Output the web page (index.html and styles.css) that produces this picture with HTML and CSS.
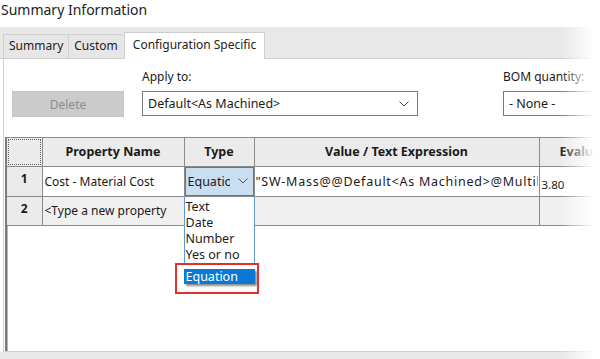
FILE: index.html
```html
<!DOCTYPE html>
<html lang="en">
<head>
    <meta charset="UTF-8">
    <title>Summary Information</title>
    <link rel="stylesheet" href="styles.css">
</head>
<body>
    <div class="window">
        <div class="title">Summary Information</div>

        <div class="tabs">
            <div class="tab">Summary</div>
            <div class="tab">Custom</div>
            <div class="tab active">Configuration Specific</div>
        </div>

        <div class="panel">
            <div class="form-row">
                <div class="field field-delete">
                    <div class="label">&nbsp;</div>
                    <button class="btn" disabled>Delete</button>
                </div>
                <div class="field field-apply">
                    <div class="label">Apply to:</div>
                    <div class="select">
                        <span>Default&lt;As Machined&gt;</span>
                        <svg class="chev" width="10" height="6" viewBox="0 0 10 6"><path d="M0.5 0.5 L5 5 L9.5 0.5" fill="none" stroke="#444" stroke-width="1"/></svg>
                    </div>
                </div>
                <div class="field field-bom">
                    <div class="label">BOM quantity:</div>
                    <div class="select">
                        <span>- None -</span>
                    </div>
                </div>
            </div>

            <div class="grid">
                <table class="props">
                    <colgroup>
                        <col class="c-num">
                        <col class="c-name">
                        <col class="c-type">
                        <col class="c-value">
                        <col class="c-eval">
                    </colgroup>
                    <thead>
                        <tr>
                            <th class="corner"></th>
                            <th>Property Name</th>
                            <th>Type</th>
                            <th>Value / Text Expression</th>
                            <th class="eval-head">Evaluated Value</th>
                        </tr>
                    </thead>
                    <tbody>
                        <tr class="row-filled">
                            <td class="num">1</td>
                            <td>Cost - Material Cost</td>
                            <td class="type-cell">
                                <div class="combo">
                                    <span class="combo-text">Equation</span>
                                    <svg class="chev" width="10" height="6" viewBox="0 0 10 6"><path d="M0.5 0.5 L5 5 L9.5 0.5" fill="none" stroke="#555" stroke-width="1"/></svg>
                                </div>
                                <div class="dropdown">
                                    <ul class="options">
                                        <li>Text</li>
                                        <li>Date</li>
                                        <li>Number</li>
                                        <li>Yes or no</li>
                                    </ul>
                                    <div class="option-hot">Equation</div>
                                    <div class="callout"></div>
                                </div>
                            </td>
                            <td class="expr"><span class="expr-text">"SW-Mass@@Default&lt;As Machined&gt;@Multibody"</span></td>
                            <td class="eval">3.80</td>
                        </tr>
                        <tr class="row-new">
                            <td class="num">2</td>
                            <td><span class="new-prop">&lt;Type a new property&gt;</span></td>
                            <td></td>
                            <td></td>
                            <td></td>
                        </tr>
                    </tbody>
                </table>
            </div>
        </div>

        <div class="footer"></div>
        <div class="fade"></div>
    </div>
</body>
</html>
```

FILE: styles.css
```css
* {
    box-sizing: border-box;
}

body {
    margin: 0;
    background: #fff;
    font-family: "Noto Sans", "Open Sans", sans-serif;
    font-size: 12px;
    color: #1a1a1a;
}

.window {
    position: relative;
    width: 600px;
    height: 359px;
    overflow: hidden;
}

.title {
    height: 27px;
    padding-left: 1px;
    font-size: 14px;
    line-height: 19px;
    color: #222;
}

/* tab strip */
.tabs {
    height: 32px;
    background: #e8e8e8;
    border-bottom: 1px solid #d0d0d0;
    display: flex;
    align-items: flex-end;
    padding-left: 3px;
}

.tab {
    height: 24px;
    padding: 0 5px;
    border: 1px solid #cfcfcf;
    border-bottom: none;
    border-right: none;
    background: #e6e6e6;
    font-size: 12px;
    line-height: 22px;
    color: #222;
}

.tab.active {
    height: 27px;
    margin-bottom: -1px;
    margin-left: 1px;
    background: #fff;
    border-right: 1px solid #cfcfcf;
    padding: 0 8px;
    line-height: 24px;
}

/* panel */
.panel {
    height: 293px;
    margin-left: 3px;
    border-left: 1px solid #d0d0d0;
    border-bottom: 1px solid #d0d0d0;
    padding-top: 10px;
}

.form-row {
    display: flex;
    padding-left: 8px;
}

.field {
    flex-shrink: 0;
}

.label {
    height: 16px;
    font-size: 12px;
    line-height: 16px;
    margin-bottom: 6px;
    white-space: nowrap;
}

.field-delete { width: 112px; }
.field-apply { width: 276px; margin-left: 18px; }
.field-bom { width: 130px; margin-left: 85px; }

.btn {
    width: 112px;
    height: 26px;
    border: 1px solid #c4c4c4;
    background: #cbcbcb;
    color: #8c8c8c;
    font-family: inherit;
    font-size: 12px;
    padding: 0;
}

.select {
    height: 25px;
    border: 1px solid #7a7a7a;
    background: #fff;
    display: flex;
    align-items: center;
    justify-content: space-between;
    padding: 0 8px 0 5px;
    font-size: 12.5px;
}

.chev {
    display: block;
    flex-shrink: 0;
}

/* property grid */
.grid {
    margin-top: 20px;
    margin-left: 1px;
    height: 214px;
    border-left: 2px solid #7a7a7a;
    border-top: 1px solid #8a8a8a;
    box-shadow: inset 1px 0 0 #b4b4b4;
}

.props {
    border-collapse: collapse;
    table-layout: fixed;
    width: 700px;
}

.c-num { width: 35px; }
.c-name { width: 142px; }
.c-type { width: 70px; }
.c-value { width: 285px; }
.c-eval { width: 168px; }

.props th,
.props td {
    border: 1px solid #8a8a8a;
    padding: 0 2px;
    white-space: nowrap;
    overflow: hidden;
}

.props th {
    height: 28px;
    background: #ebebeb;
    font-weight: bold;
    font-size: 12.5px;
    text-align: center;
    border-top: none;
}

.props th:first-child,
.props td:first-child {
    border-left: none;
}

.props th.corner {
    outline: 1px dotted #666;
    outline-offset: -2px;
}

.props th.eval-head {
    text-align: left;
    padding-left: 20px;
}

.props td {
    height: 30px;
    font-size: 12px;
}

.props td.num {
    background: #ebebeb;
    font-weight: bold;
    text-align: center;
    vertical-align: top;
    padding-top: 3px;
}

.row-filled td {
    background: #fff;
}

.row-new td {
    height: 29px;
    background: #f0f0f0;
}

.props td.expr {
    padding-left: 1px;
}

.expr-text {
    display: block;
    width: 282px;
    overflow: hidden;
    font-size: 12.5px;
    letter-spacing: 0.75px;
}

.new-prop {
    display: block;
    width: 122px;
    overflow: hidden;
}

.props td.eval {
    font-size: 11.5px;
    padding-top: 6px;
}

/* type combo + open list */
.props td.type-cell {
    padding: 0;
    overflow: visible;
    position: relative;
}

.combo {
    height: 29px;
    background: #c9def1;
    border: 1px solid #3f80bd;
    display: flex;
    align-items: center;
    padding: 0 5px 0 2px;
    font-size: 12.5px;
}

.combo-text {
    width: 44px;
    overflow: hidden;
    margin-right: 8px;
}

.dropdown {
    position: absolute;
    left: -1px;
    top: 30px;
    width: 71px;
}

.options {
    list-style: none;
    margin: 0;
    padding: 2px 0 0 1px;
    height: 67px;
    overflow: hidden;
    background: #fff;
    border: 1px solid #5a9ad8;
    border-top: none;
    border-bottom: none;
}

.options li {
    height: 16px;
    line-height: 16px;
    font-size: 12.5px;
}

.option-hot {
    margin-top: 5px;
    height: 15px;
    line-height: 15px;
    background: #0a78d7;
    color: #fff;
    padding-left: 2px;
    font-size: 12.5px;
    box-shadow: 2px 2px 2px rgba(0, 0, 0, 0.45);
}

.callout {
    position: absolute;
    left: -9px;
    top: 66px;
    width: 84px;
    height: 31px;
    border: 2px solid #e2302c;
}

.footer {
    height: 7px;
    background: #e8e8e8;
}

/* right edge fade of the screenshot */
.fade {
    position: absolute;
    top: 0;
    right: 0;
    width: 40px;
    height: 100%;
    background: linear-gradient(to right, rgba(255, 255, 255, 0), #fff 85%);
}
```
